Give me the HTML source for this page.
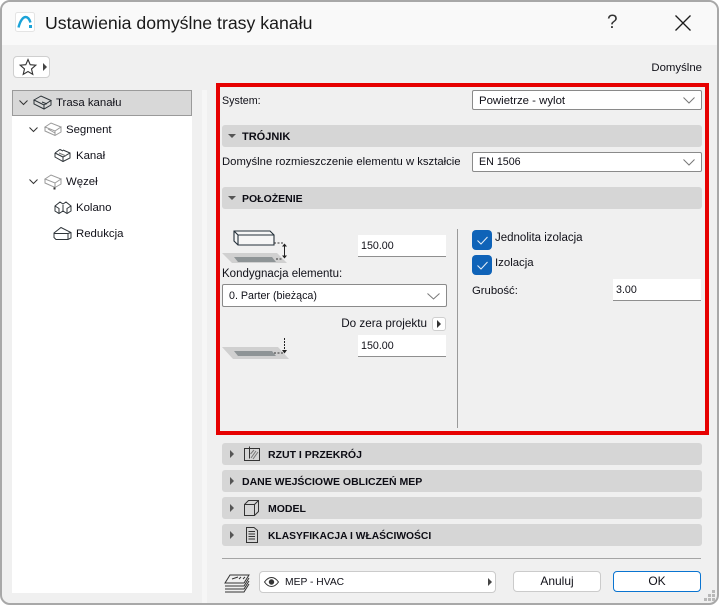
<!DOCTYPE html>
<html><head><meta charset="utf-8">
<style>
html,body{margin:0;padding:0;background:#fff}
#w{position:relative;width:719px;height:605px;overflow:hidden;background:#fff;font-family:"Liberation Sans","DejaVu Sans",sans-serif;font-size:11.4px;color:#101018}
#win{position:absolute;left:0;top:0;width:715px;height:601px;border:2px solid #a8a8a8;border-radius:10px;background:#f0f0f0;overflow:hidden}
#tb{position:absolute;left:0;top:0;width:715px;height:43px;background:#f9f9f9}
.a{position:absolute;white-space:nowrap}
.t{position:absolute;white-space:nowrap;line-height:14px}
.n{font-size:10.7px}
.bar{position:absolute;left:222px;width:480px;height:22px;background:#d6d6d6;border-radius:3px}
.h{position:absolute;white-space:nowrap;font-weight:bold;font-size:10.5px;line-height:14px;color:#0c0c14}
.sel,.inp,.btn{position:absolute;box-sizing:border-box;background:#fff}
.sel{border:1px solid #8a8a8a;border-radius:2px}
.inp{border-bottom:1px solid #8f8f8f}
.btn{border:1px solid #cbcbcb;border-radius:4px;text-align:center;line-height:19px;font-size:12px}
svg{position:absolute;overflow:visible}
.cb{position:absolute;left:472px;width:20px;height:20px;background:#0f63b8;border-radius:4px}
</style></head><body>
<div id="w">
<div id="win"><div id="tb"></div></div>

<!-- App icon -->
<svg style="left:15px;top:12px" width="20" height="20" viewBox="0 0 20 20">
<rect x=".5" y=".5" width="19" height="19" rx="2" fill="#fff" stroke="#e4e4e4"/>
<path d="M3.500 15.500C5 9 8 5 10.500 5C13 5 14.500 7.500 15.500 10.500" fill="none" stroke="#1ba3d8" stroke-width="2.400"/>
<rect x="14" y="13" width="3" height="3" fill="#1ba3d8"/>
</svg>
<div class="a" style="left:45px;top:12px;font-size:17.7px;line-height:22px;color:#1a1a1a">Ustawienia domyślne trasy kanału</div>
<div class="a" style="left:607px;top:11px;font-size:19px;line-height:24px;color:#333">?</div>
<svg style="left:675px;top:15px" width="16" height="16" viewBox="0 0 16 16"><path d="M.5 .5L15.500 15.500M15.500 .5L.5 15.500" stroke="#1c1c1c" stroke-width="1.300" fill="none"/></svg>

<!-- Star button -->
<div class="a" style="left:13px;top:56px;width:37px;height:22px;box-sizing:border-box;background:#fff;border:1px solid #cfcfcf;border-radius:4px"></div>
<svg style="left:19px;top:58px" width="18" height="18" viewBox="0 0 18 18"><path d="M9 1.500L11.200 6.700L16.800 7.200L12.500 10.900L13.800 16.400L9 13.500L4.200 16.400L5.500 10.900L1.200 7.200L6.800 6.700Z" fill="none" stroke="#333" stroke-width="1.100"/></svg>
<svg style="left:43px;top:63px" width="5" height="8" viewBox="0 0 5 8"><path d="M0 0L4 4L0 8Z" fill="#444"/></svg>
<div class="t" style="right:17px;top:61px">Domyślne</div>

<!-- Tree -->
<div class="a" style="left:12px;top:90px;width:180px;height:503px;background:#fff"></div>
<div class="a" style="left:202px;top:90px;width:5px;height:513px;background:#f6f6f6"></div>
<div class="a" style="left:12px;top:90px;width:180px;height:26px;box-sizing:border-box;background:#d8d8d8;border:1px solid #9a9a9a"></div>

<svg style="left:19px;top:100px" width="10" height="6"><path d="M.5 .5L4.500 4.500L8.500 .5" fill="none" stroke="#333"/></svg>
<svg style="left:33px;top:95px" width="20" height="15" viewBox="0 0 20 15" fill="none" stroke="#2c3338"><path d="M1 5L8 1L18 5.500L11 10ZM1 5V9L11 14L18 10V5.500M11 10V14M9 7L14 9"/></svg>
<div class="t" style="left:56px;top:96px">Trasa kanału</div>

<svg style="left:29px;top:127px" width="10" height="6"><path d="M.5 .5L4.500 4.500L8.500 .5" fill="none" stroke="#333"/></svg>
<svg style="left:44px;top:122px" width="18" height="15" viewBox="0 0 18 15" fill="none" stroke="#9a9a9a"><path d="M1 5L7 1L17 5L11 9ZM1 5V9L11 13.500L17 10V5M11 9V13.500M4 7L11 11"/></svg>
<div class="t" style="left:66px;top:123px">Segment</div>

<svg style="left:54px;top:148px" width="18" height="15" viewBox="0 0 18 15" fill="none" stroke="#2f353a"><path d="M1 5L6 1.500L9 3M1 5V9L9 13.500L16 10V5L9 2M1 5L9 9L16 5M9 9V13.500"/><path d="M5 5L12 8" stroke="#777"/></svg>
<div class="t" style="left:76px;top:149px">Kanał</div>

<svg style="left:29px;top:179px" width="10" height="6"><path d="M.5 .5L4.500 4.500L8.500 .5" fill="none" stroke="#333"/></svg>
<svg style="left:44px;top:174px" width="18" height="16" viewBox="0 0 18 16" fill="none" stroke="#9a9a9a"><path d="M1 5L7 1L17 5L11 9ZM1 5V9L11 13.500L17 10V5M11 9V13.500"/><rect x="9.500" y="13.500" width="2" height="2" fill="#333" stroke="none"/></svg>
<div class="t" style="left:66px;top:175px">Węzeł</div>

<svg style="left:54px;top:200px" width="18" height="15" viewBox="0 0 18 15" fill="none" stroke="#2f353a"><path d="M1 6L6 2L9 4L12 2L17 6V11L13 13.500L9 11L5 13.500L1 11ZM1 6L5 8.500V13.500M9 5V11M17 6L13 8.500V13.500"/></svg>
<div class="t" style="left:76px;top:201px">Kolano</div>

<svg style="left:53px;top:226px" width="19" height="15" viewBox="0 0 19 15" fill="none" stroke="#2f353a"><path d="M1 7L8 1.500L18 6.500V12L15 13.500H3L1 11.500ZM1 7.500H15L18 6.500M15 7.500V13.500"/></svg>
<div class="t" style="left:76px;top:227px">Redukcja</div>

<!-- Red frame -->
<div class="a" style="left:216px;top:83px;width:493px;height:352px;box-sizing:border-box;border:4px solid #e60000"></div>

<div class="t n" style="left:222px;top:94px">System:</div>
<div class="sel" style="left:472px;top:90px;width:230px;height:20px"></div>
<div class="t" style="left:479px;top:94px">Powietrze - wylot</div>
<svg style="left:683px;top:97px" width="12" height="7"><path d="M.5 .5L6 6L11.500 .5" fill="none" stroke="#777"/></svg>

<div class="bar" style="top:125px"></div>
<svg style="left:228px;top:134px" width="8" height="5"><path d="M0 0H8L4 4Z" fill="#555"/></svg>
<div class="h" style="left:242px;top:130px;font-size:11px">TRÓJNIK</div>

<div class="t" style="left:222px;top:155px;font-size:11.3px">Domyślne rozmieszczenie elementu w kształcie</div>
<div class="sel" style="left:472px;top:152px;width:230px;height:20px"></div>
<div class="t n" style="left:479px;top:155px">EN 1506</div>
<svg style="left:683px;top:159px" width="12" height="7"><path d="M.5 .5L6 6L11.500 .5" fill="none" stroke="#777"/></svg>

<div class="bar" style="top:187px"></div>
<svg style="left:228px;top:196px" width="8" height="5"><path d="M0 0H8L4 4Z" fill="#555"/></svg>
<div class="h" style="left:242px;top:192px">POŁOŻENIE</div>

<!-- Elevation icon 1 -->
<svg style="left:220px;top:225px" width="80" height="45" viewBox="0 0 80 45">
<path d="M2 28H57L67 38H12Z" fill="#d0d0d0"/>
<path d="M14 32H52L56 37H18Z" fill="#8e9496"/>
<path d="M14 6H50L54 10V20H18L14 16ZM14 6L18 10V20M18 10H54" fill="#f6f6f6" stroke="#24303a" stroke-width="1.100"/>
<path d="M54 18H64M56 34H63" stroke="#333" stroke-dasharray="2 1.500" fill="none"/>
<path d="M64.500 20V32" stroke="#222" fill="none"/>
<path d="M62 21.500L64.500 18.500L67 21.500ZM62 30.500L64.500 33.500L67 30.500Z" fill="#222"/>
</svg>
<div class="inp" style="left:358px;top:235px;width:88px;height:22px"></div>
<div class="t n" style="left:361px;top:239px">150.00</div>

<div class="t" style="left:222px;top:267px;font-size:11.5px">Kondygnacja elementu:</div>
<div class="sel" style="left:222px;top:284px;width:225px;height:23px"></div>
<div class="t n" style="left:229px;top:289px">0. Parter (bieżąca)</div>
<svg style="left:427px;top:293px" width="13" height="7"><path d="M.5 .5L6.500 6L12.500 .5" fill="none" stroke="#777"/></svg>

<div class="t" style="right:292px;top:317px;font-size:11.7px">Do zera projektu</div>
<div class="a" style="left:432px;top:317px;width:14px;height:14px;box-sizing:border-box;background:#fff;border:1px solid #cfcfcf;border-radius:3px"></div>
<svg style="left:437px;top:320px" width="5" height="8"><path d="M0 0L4 4L0 8Z" fill="#333"/></svg>

<svg style="left:220px;top:335px" width="80" height="30" viewBox="0 0 80 30">
<path d="M2 12H58L69 24H13Z" fill="#d0d0d0"/>
<path d="M14 16H52L56 21H18Z" fill="#8e9496"/>
<path d="M54 18H63" stroke="#333" stroke-dasharray="2 1.500"/>
<path d="M64.500 3V15" stroke="#222" stroke-dasharray="2 1"/>
<path d="M62 15L64.500 18.500L67 15Z" fill="#222"/>
</svg>
<div class="inp" style="left:358px;top:335px;width:88px;height:22px"></div>
<div class="t n" style="left:361px;top:339px">150.00</div>

<div class="a" style="left:457px;top:229px;width:1px;height:199px;background:#9a9a9a"></div>

<div class="cb" style="top:230px"></div>
<svg style="left:477px;top:236px" width="11" height="9"><path d="M.5 4.500L4 8L10.500 1" fill="none" stroke="#e8f0f8" stroke-width="1"/></svg>
<div class="t" style="left:495px;top:231px;font-size:11.5px">Jednolita izolacja</div>
<div class="cb" style="top:255px"></div>
<svg style="left:477px;top:261px" width="11" height="9"><path d="M.5 4.500L4 8L10.500 1" fill="none" stroke="#e8f0f8" stroke-width="1"/></svg>
<div class="t" style="left:495px;top:256px">Izolacja</div>
<div class="t" style="left:472px;top:284px;font-size:11.3px">Grubość:</div>
<div class="inp" style="left:613px;top:279px;width:88px;height:22px"></div>
<div class="t n" style="left:616px;top:283px">3.00</div>

<!-- Collapsed sections -->
<div class="bar" style="top:443px"></div>
<svg style="left:230px;top:450px" width="5" height="8"><path d="M0 0L4 4L0 8Z" fill="#555"/></svg>
<svg style="left:244px;top:446px" width="17" height="16" viewBox="0 0 17 16" fill="none" stroke="#333"><path d="M.5 2.500H15.500V14.500H.5ZM5.500 .5V12.500"/><path d="M7 12L12 5M9 13L14 6M6.500 8L10 4" stroke="#777"/></svg>
<div class="h" style="left:268px;top:448px">RZUT I PRZEKRÓJ</div>

<div class="bar" style="top:470px"></div>
<svg style="left:230px;top:477px" width="5" height="8"><path d="M0 0L4 4L0 8Z" fill="#555"/></svg>
<div class="h" style="left:242px;top:475px">DANE WEJŚCIOWE OBLICZEŃ MEP</div>

<div class="bar" style="top:497px"></div>
<svg style="left:230px;top:504px" width="5" height="8"><path d="M0 0L4 4L0 8Z" fill="#555"/></svg>
<svg style="left:244px;top:500px" width="16" height="16" viewBox="0 0 16 16" fill="none" stroke="#333"><path d="M.5 4.500L4.500 .5H14.500V11.500L10.500 15.500H.5ZM.5 4.500H10.500V15.500M10.500 4.500L14.500 .5"/></svg>
<div class="h" style="left:268px;top:502px">MODEL</div>

<div class="bar" style="top:524px"></div>
<svg style="left:230px;top:531px" width="5" height="8"><path d="M0 0L4 4L0 8Z" fill="#555"/></svg>
<svg style="left:246px;top:527px" width="12" height="16" viewBox="0 0 12 16" fill="none" stroke="#333"><path d="M.5 .5H8L11.500 3.500V15.500H.5ZM2.500 4.500H9M2.500 7H9M2.500 9.500H9M2.500 12H9"/></svg>
<div class="h" style="left:268px;top:530px;font-size:10.3px">KLASYFIKACJA I WŁAŚCIWOŚCI</div>

<div class="a" style="left:222px;top:558px;width:479px;height:1px;background:#a5a5a5"></div>

<!-- Footer -->
<svg style="left:224px;top:574px" width="26" height="19" viewBox="0 0 26 19" fill="none" stroke="#333"><path d="M6 1H25L20 9H1ZM1 12H20L25 4M1 15H20L25 7M1 18H20L25 10M8 5L14 3M15 5L17 3M19 5L21 3"/></svg>
<div class="sel" style="left:259px;top:571px;width:237px;height:22px;border-color:#cbcbcb;border-radius:4px"></div>
<svg style="left:264px;top:577px" width="15" height="10" viewBox="0 0 15 10" fill="none" stroke="#333"><path d="M.5 5C3 1.500 5.500 .5 7.500 .5S12 1.500 14.500 5C12 8.500 9.500 9.500 7.500 9.500S3 8.500 .5 5Z"/><circle cx="7.500" cy="5" r="2.200" fill="#333"/></svg>
<div class="t" style="left:285px;top:576px;font-size:10.3px">MEP - HVAC</div>
<svg style="left:488px;top:578px" width="5" height="8"><path d="M0 0L4 4L0 8Z" fill="#444"/></svg>
<div class="btn" style="left:513px;top:571px;width:88px;height:21px">Anuluj</div>
<div class="btn" style="left:613px;top:571px;width:88px;height:21px;border-color:#0a74d0;">OK</div>

<!-- Grip -->
<svg style="left:703px;top:590px" width="14" height="12" fill="#b8b8b8"><rect x="9" y="0" width="3" height="3"/><rect x="5" y="4" width="3" height="3"/><rect x="9" y="4" width="3" height="3"/><rect x="1" y="8" width="3" height="3"/><rect x="5" y="8" width="3" height="3"/><rect x="9" y="8" width="3" height="3"/></svg>
</div>
</body></html>
